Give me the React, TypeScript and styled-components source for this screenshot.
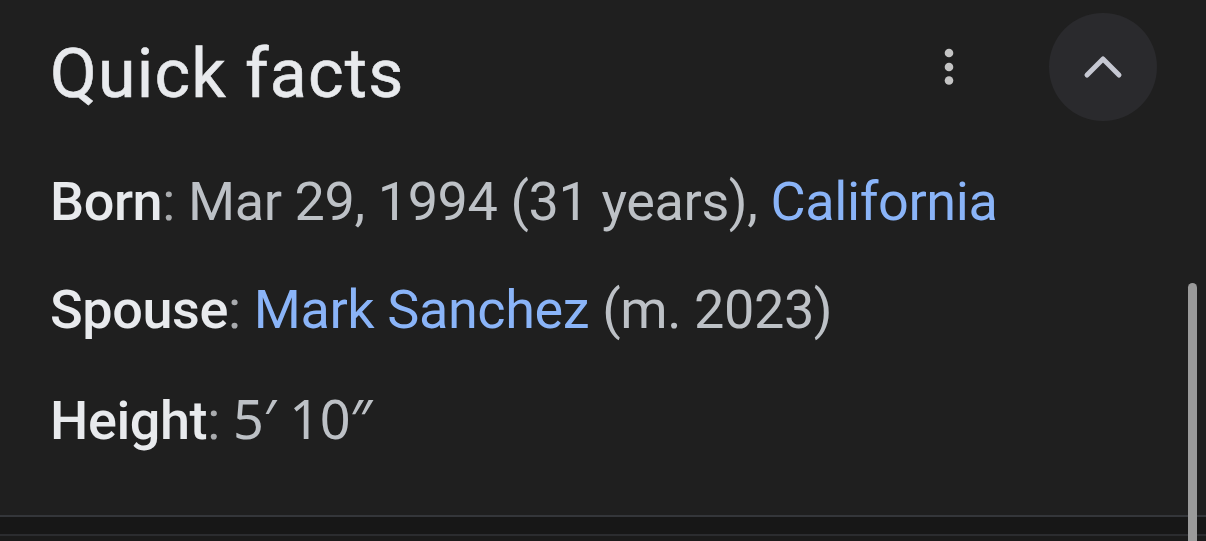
import React from 'react';
import styled, { createGlobalStyle } from 'styled-components';

const GlobalStyle = createGlobalStyle`
  html, body {
    margin: 0;
    padding: 0;
    background: #1f1f1f;
  }
  * {
    box-sizing: border-box;
  }
`;

const facts = [
  {
    label: 'Born',
    parts: [
      { text: 'Mar 29, 1994 (31 years), ' },
      { text: 'California', link: true },
    ],
  },
  {
    label: 'Spouse',
    parts: [{ text: 'Mark Sanchez', link: true }, { text: ' (m. 2023)' }],
  },
  {
    label: 'Height',
    parts: [{ text: '5′ 10″', primes: true }],
  },
];

export default function App() {
  return (
    <>
      <GlobalStyle />
      <Panel>
        <Header>
          <Title>Quick facts</Title>
          <MoreButton aria-label="More options">
            <svg width="10" height="38" viewBox="0 0 10 38">
              <circle cx="5" cy="5" r="4.3" fill="#c4c4c4" />
              <circle cx="5" cy="19" r="4.3" fill="#c4c4c4" />
              <circle cx="5" cy="32.5" r="4.3" fill="#c4c4c4" />
            </svg>
          </MoreButton>
          <CollapseButton aria-label="Collapse">
            <svg width="40" height="26" viewBox="0 0 40 26">
              <polyline
                points="4,22 20,6 36,22"
                fill="none"
                stroke="#c6c8d2"
                strokeWidth="5"
                strokeLinecap="round"
                strokeLinejoin="round"
              />
            </svg>
          </CollapseButton>
        </Header>
        <FactList>
          {facts.map((fact) => (
            <FactRow key={fact.label}>
              <Label>{fact.label}</Label>
              <Colon>: </Colon>
              {fact.parts.map((p, i) => (
                <Value key={i} $link={p.link} $primes={p.primes}>
                  {p.text}
                </Value>
              ))}
            </FactRow>
          ))}
        </FactList>
        <Footer />
        <ScrollThumb />
      </Panel>
    </>
  );
}

const Panel = styled.div`
  position: relative;
  height: 541px;
  display: flex;
  flex-direction: column;
  background: #1f1f1f;
  font-family: Roboto, 'Noto Sans', sans-serif;
  overflow: hidden;
`;

const Header = styled.div`
  display: flex;
  align-items: center;
  height: 108px;
  margin-top: 13px;
  padding: 0 49px 0 50px;
`;

const Title = styled.h1`
  flex: 1;
  margin: 14px 0 0 0;
  font-size: 68px;
  line-height: 68px;
  font-weight: 400;
  letter-spacing: 1.2px;
  color: #e8eaed;
  -webkit-text-stroke: 0.6px #e8eaed;
`;

const MoreButton = styled.div`
  display: flex;
  align-items: center;
  justify-content: center;
  width: 10px;
  margin-right: 95px;
`;

const CollapseButton = styled.div`
  display: flex;
  align-items: center;
  justify-content: center;
  width: 108px;
  height: 108px;
  border-radius: 50%;
  background: #2a2a2d;
  padding-bottom: 2px;
`;

const FactList = styled.div`
  flex: 1;
  display: flex;
  flex-direction: column;
  padding: 27px 0 0 50px;
`;

const FactRow = styled.div`
  font-size: 54px;
  line-height: 108px;
  letter-spacing: -0.4px;
  white-space: nowrap;
`;

const Label = styled.span`
  font-weight: 500;
  color: #e8eaed;
`;

const Colon = styled.span`
  color: #a9abae;
`;

const Value = styled.span<{ $link?: boolean; $primes?: boolean }>`
  color: ${(p) => (p.$link ? '#8ab4f8' : '#bdc1c6')};
  font-family: ${(p) =>
    p.$primes ? "'Noto Sans', Roboto, sans-serif" : 'inherit'};
`;

const Footer = styled.div`
  height: 26px;
  border-top: 2px solid #34363a;
  background: linear-gradient(
    to bottom,
    #171717 0,
    #171717 17px,
    #2b2c2f 17px,
    #2b2c2f 19px,
    #1b1b1b 19px
  );
`;

const ScrollThumb = styled.div`
  position: absolute;
  top: 283px;
  bottom: 0;
  right: 9px;
  width: 9px;
  border-radius: 5px 5px 0 0;
  background: #9a9a9a;
`;
